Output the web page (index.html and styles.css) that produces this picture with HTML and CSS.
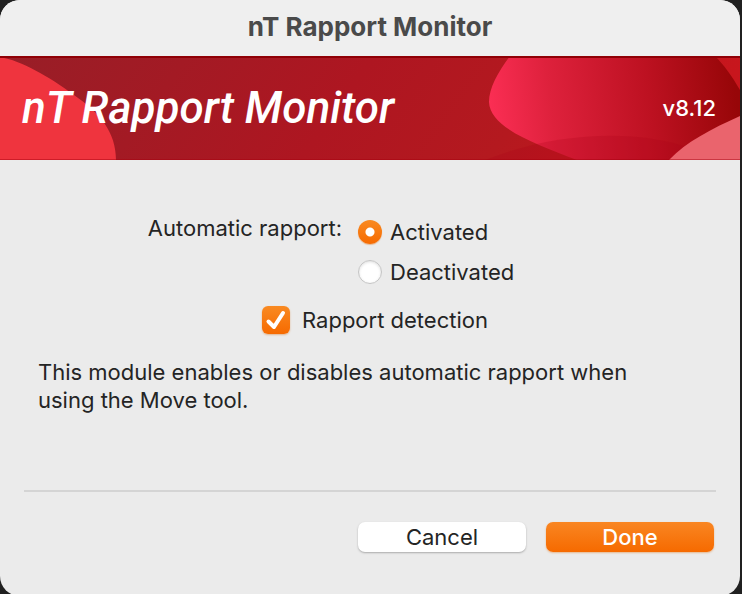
FILE: index.html
```html
<!DOCTYPE html>
<html lang="en">
<head>
  <meta charset="UTF-8">
  <meta name="viewport" content="width=device-width, initial-scale=1.0">
  <title>nT Rapport Monitor</title>
  <link rel="stylesheet" href="styles.css">
</head>
<body>
  <form class="dialog">
    <header class="title-bar">nT Rapport Monitor</header>

    <div class="banner">
      <svg class="banner-art" viewBox="0 0 740 104" preserveAspectRatio="none" aria-hidden="true">
        <defs>
          <linearGradient id="base" x1="0" y1="0" x2="1" y2="0.1">
            <stop offset="0" stop-color="#981e27"/>
            <stop offset="0.5" stop-color="#ae1621"/>
            <stop offset="0.75" stop-color="#b4191f"/>
            <stop offset="1" stop-color="#c8161d"/>
          </linearGradient>
          <linearGradient id="blob" gradientUnits="userSpaceOnUse" x1="490" y1="60" x2="735" y2="30">
            <stop offset="0" stop-color="#fb2e54"/>
            <stop offset="0.25" stop-color="#de213c"/>
            <stop offset="0.65" stop-color="#bd1121"/>
            <stop offset="1" stop-color="#970608"/>
          </linearGradient>
        </defs>
        <rect width="740" height="104" fill="url(#base)"/>
        <path d="M0 1C22 5 48 20 74 39C100 57 116 76 116 104H0Z" fill="#ef343e"/>
        <path d="M510 0C498 16 489 32 489 46C490 72 536 88 577 104H740V34C732 20 724 9 715 0Z" fill="url(#blob)"/>
        <path d="M485 104C560 74 640 74 690 92L680 104Z" fill="#a70018" fill-opacity="0.22"/>
        <path d="M669 104C686 86 711 73 740 60V104Z" fill="#ea646d"/>
        <rect width="740" height="2" fill="#900006"/>
        <rect y="103" width="740" height="1" fill="#a7000d" fill-opacity="0.45"/>
      </svg>
      <h1 class="banner-title">nT Rapport Monitor</h1>
      <span class="version">v8.12</span>
    </div>

    <main class="content">
      <div class="rapport" role="radiogroup" aria-labelledby="rapport-label">
        <span class="rapport-label" id="rapport-label">Automatic rapport:</span>
        <div class="options">
          <label class="option"><input class="radio" type="radio" name="rapport" checked>Activated</label>
          <label class="option"><input class="radio" type="radio" name="rapport">Deactivated</label>
        </div>
      </div>

      <label class="detection">
        <span class="check">
          <input class="checkbox" type="checkbox" checked>
          <svg class="tick" viewBox="0 0 28 28" aria-hidden="true">
            <path d="M6.5 15.5L12 21L21 7" fill="none" stroke="#fff" stroke-width="4" stroke-linecap="round" stroke-linejoin="round"/>
          </svg>
        </span>
        Rapport detection
      </label>

      <p class="description">This module enables or disables automatic rapport when using the Move tool.</p>
    </main>

    <footer class="actions">
      <button class="button" type="button">Cancel</button>
      <button class="button primary" type="button">Done</button>
    </footer>
  </form>
</body>
</html>
```

FILE: styles.css
```css
* {
  box-sizing: border-box;
}

body {
  margin: 0;
  height: 100vh;
  padding-right: 2px;
  overflow: hidden;
  background: #202020;
  color: #242424;
  font-family: Inter, "Liberation Sans", sans-serif;
  font-size: 22px;
  line-height: 28px;
}

.dialog {
  display: flex;
  flex-direction: column;
  min-height: calc(100vh + 2px);
  border-radius: 20px;
  background: #ebebeb;
  overflow: hidden;
}

.title-bar {
  padding: 13px 0 15px;
  background: #efefef;
  color: #4a4a4a;
  font-size: 26px;
  font-weight: 700;
  text-align: center;
}

.banner {
  position: relative;
  display: flex;
  align-items: center;
  justify-content: space-between;
  height: 104px;
  padding: 0 24px 0 22px;
  color: #fff;
}

.banner-art {
  position: absolute;
  inset: 0;
  width: 100%;
  height: 100%;
}

.banner-title {
  position: relative;
  margin: 0;
  font-family: Roboto, sans-serif;
  font-size: 44px;
  font-style: italic;
  font-weight: 500;
  line-height: 48px;
}

.version {
  position: relative;
  font-weight: 500;
}

.content {
  flex: 1;
  padding: 54px 38px 0;
}

.rapport {
  display: flex;
  gap: 16px;
}

.rapport-label {
  width: calc(50% - 28px);
  text-align: right;
}

.options {
  display: flex;
  flex-direction: column;
  gap: 12px;
  padding-top: 4px;
}

.option {
  display: flex;
  align-items: center;
  gap: 8px;
}

.radio {
  appearance: none;
  width: 24px;
  height: 24px;
  margin: 0;
  border: 1px solid #c4c4c4;
  border-radius: 50%;
  background: #fff;
  box-shadow: inset 0 1px 3px #ddd;
}

.radio:checked {
  border: none;
  background: radial-gradient(circle, #fff 4px, transparent 5px), linear-gradient(#f98a22, #f66a00);
  box-shadow: 0 1px 1px #e7b78e;
}

.detection {
  display: flex;
  align-items: center;
  gap: 12px;
  margin: 20px 0 24px 224px;
}

.check {
  position: relative;
  width: 28px;
  height: 28px;
}

.checkbox {
  display: block;
  appearance: none;
  width: 28px;
  height: 28px;
  margin: 0;
  border-radius: 6px;
  background: #fff;
  box-shadow: 0 1px 2px #e0b48f;
}

.checkbox:checked {
  background: linear-gradient(#f98a22, #f66a00);
}

.tick {
  position: absolute;
  inset: 0;
  pointer-events: none;
}

.description {
  max-width: 620px;
  margin: 0;
}

.actions {
  display: flex;
  justify-content: flex-end;
  gap: 20px;
  margin: 0 24px;
  padding: 30px 2px 44px;
  border-top: 2px solid #d4d4d4;
}

.button {
  width: 168px;
  height: 30px;
  padding: 0;
  border: none;
  border-radius: 7px;
  background: #fff;
  box-shadow: 0 1px 2px #aaa;
  color: #242424;
  font: inherit;
}

.primary {
  background: linear-gradient(#f98622, #f66a00);
  box-shadow: 0 1px 2px #e7b78e;
  color: #fff;
  font-weight: 500;
}
```
